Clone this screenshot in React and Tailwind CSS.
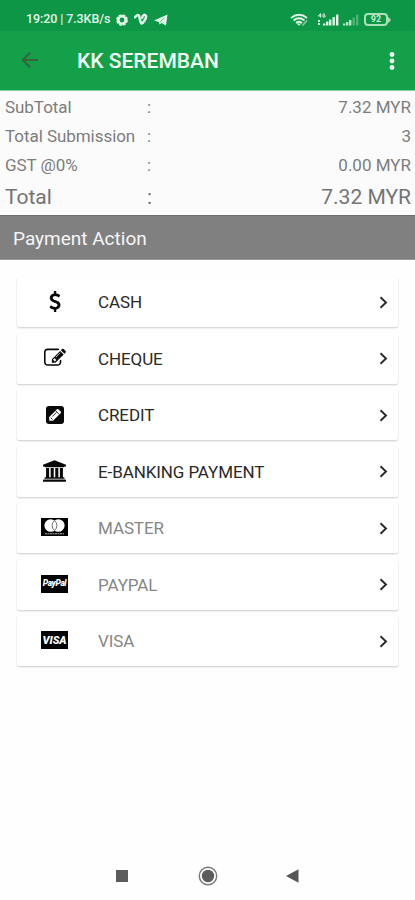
import React from "react";

function DollarIcon() {
  return (
    <svg viewBox="0 0 1792 1792" className="mb-[2px] h-[21px] w-[22px]" fill="currentColor">
      <path d="M1362 1185q0 153-99.500 263.500t-258.500 136.500v175q0 14-9 23t-23 9h-135q-13 0-22.500-9.500t-9.500-22.500v-175q-66-9-127.500-31t-101.500-44.500-74-48-46.500-37.500-17.500-18q-17-21-2-41l103-135q7-10 23-12 15-2 24 9l2 2q113 99 243 125 37 8 74 8 81 0 142.500-43t61.500-122q0-28-15-53t-33.500-42-58.500-37.500-66-32-80-32.500q-39-16-61.500-25t-61.500-26.500-62.500-31-56.500-35.500-53.500-42.500-43.500-49-35.500-58-21-66.500-8.500-78q0-138 98-242t255-134v-180q0-13 9.500-22.500t22.500-9.500h135q14 0 23 9t9 23v176q57 6 110.500 23t87 33.500 63.500 37.500 39 29 15 14q17 18 5 38l-81 146q-8 15-23 16-14 3-27-7-3-3-14.500-12t-39-26.500-58.500-32-74.500-26-85.500-11.500q-95 0-155 43t-60 111q0 26 8.500 48t29.500 41.500 39.500 33 56 31 60.500 27 70 27.500q53 20 81 31.500t76 35 75.500 42.500 62 50 53 63.500 31.500 76.500 13 94z" />
    </svg>
  );
}

function ChequeIcon() {
  return (
    <svg viewBox="0 0 1792 1792" className="mb-[2px] h-[22px] w-[22px]" fill="currentColor">
      <path d="M888 1184l116-116-152-152-116 116v56h96v96h56zm440-720q-16-16-33 1l-350 350q-17 17-1 33t33-1l350-350q17-17 1-33zm80 594v190q0 119-84.5 203.5t-203.5 84.5h-832q-119 0-203.5-84.5t-84.5-203.5v-832q0-119 84.5-203.5t203.5-84.5h832q63 0 117 25 15 7 18 23 3 17-9 29l-49 49q-14 14-32 8-23-6-45-6h-832q-66 0-113 47t-47 113v832q0 66 47 113t113 47h832q66 0 113-47t47-113v-126q0-13 9-22l64-64q15-15 35-7t20 29zm-96-738l288 288-672 672h-288v-288zm444 132l-92 92-288-288 92-92q28-28 68-28t68 28l152 152q28 28 28 68t-28 68z" />
    </svg>
  );
}

function CreditIcon() {
  return (
    <svg viewBox="0 0 18 18" className="mb-[1px] h-[18px] w-[18px]">
      <rect width="18" height="18" rx="3" fill="currentColor" />
      <path d="M3.200 14.800V11L10.800 3.400Q11.700 2.600 12.600 3.400L14.600 5.400Q15.400 6.300 14.600 7.200L7 14.800z" fill="#fff" />
      <path d="M4.600 11.600L6.400 13.400M9.600 4.800L13.200 8.400M6.300 10.600L10.500 6.400" stroke="currentColor" strokeWidth=".8" />
    </svg>
  );
}

function BankIcon() {
  return (
    <svg viewBox="0 0 1920 1792" className="mb-[2px] h-[22px] w-[23px]" fill="currentColor">
      <path d="M960 0l960 384v128h-128q0 26-20.500 45t-48.500 19h-1526q-28 0-48.500-19t-20.500-45h-128v-128zm-704 640h256v768h128v-768h256v768h128v-768h256v768h128v-768h256v768h59q28 0 48.500 19t20.500 45v64h-1664v-64q0-26 20.500-45t48.500-19h59v-768zm1595 960q28 0 48.500 19t20.500 45v128h-1920v-128q0-26 20.500-45t48.500-19h1782z" />
    </svg>
  );
}

function MasterIcon() {
  return (
    <svg viewBox="0 0 27 18" className="mb-[2px] h-[18px] w-[27px]">
      <rect width="27" height="18" fill="#000" />
      <circle cx="9.700" cy="7.500" r="6.300" fill="#fff" />
      <circle cx="17.300" cy="7.500" r="6.300" fill="#fff" />
      <path d="M13.500 2.600a6.200 6.200 0 0 1 0 9.800a6.200 6.200 0 0 1 0-9.800z" fill="#fff" stroke="#333" strokeWidth=".7" />
      <path d="M4 15.800h19" stroke="#fff" strokeWidth=".7" strokeDasharray="2 .5" />
    </svg>
  );
}

function WordCard({ children }) {
  return (
    <span className="mb-[2px] flex h-[18px] w-[27px] items-center justify-center overflow-hidden bg-black leading-none whitespace-nowrap text-white italic">
      {children}
    </span>
  );
}

const totals = [
  ["SubTotal", "7.32 MYR"],
  ["Total Submission", "3"],
  ["GST @0%", "0.00 MYR"],
];

const actions = [
  { label: "CASH", icon: <DollarIcon /> },
  { label: "CHEQUE", icon: <ChequeIcon /> },
  { label: "CREDIT", icon: <CreditIcon /> },
  { label: "E-BANKING PAYMENT", icon: <BankIcon /> },
  { label: "MASTER", muted: true, icon: <MasterIcon /> },
  { label: "PAYPAL", muted: true, icon: <WordCard><span className="text-[8.500px] font-black tracking-[-0.400px]">PayPal</span></WordCard> },
  { label: "VISA", muted: true, icon: <WordCard><span className="text-[11px] font-black">VISA</span></WordCard> },
];

function StatusBar() {
  return (
    <div className="flex h-[31px] shrink-0 items-center bg-[#0c9646] pt-[8px] pr-6 pl-[26px] text-[#e3f6e8]">
      <span className="w-[87px] text-[12.500px] font-medium tracking-[-0.100px] whitespace-nowrap">19:20 | 7.3KB/s</span>
      <svg viewBox="0 0 12 12" className="ml-[3px] h-3 w-3">
        <circle cx="6" cy="6" r="3.700" fill="none" stroke="currentColor" strokeWidth="2.600" />
        <circle cx="6" cy="6" r="5" fill="none" stroke="currentColor" strokeWidth="1.800" strokeDasharray="2.600 1.330" />
      </svg>
      <svg viewBox="0 0 14 13" className="ml-[6px] h-[13px] w-[14px]" fill="none" stroke="currentColor">
        <path d="M1 4.200C3.200 1.400 5 1 5.500 4.500S7 10.500 7.800 10.500S12.500 5.500 12 3.200S8.500 1.600 8.200 4.800" strokeWidth="2.500" strokeLinecap="round" />
      </svg>
      <svg viewBox="0 0 14 12" className="ml-[6px] h-3 w-[14px]" fill="currentColor">
        <path d="M0 6.500L13.500 .5L12 11.500L7.500 9L5.500 10.500L4.800 8z" />
        <path d="M5.500 8.500L10.500 3.800" stroke="#0c9646" strokeWidth=".6" />
      </svg>
      <div className="ml-auto flex items-center">
        <svg viewBox="0 0 19 14" className="h-[14px] w-[19px]" fill="none" stroke="currentColor" strokeWidth="1.700">
          <path d="M1 5Q9 -1.500 17 5M3.500 7.500Q9 3 14.500 7.500M6 10Q9 7.500 12 10" />
          <path d="M7.300 10.800L9 12.600l1.700-1.800z" fill="currentColor" strokeWidth=".5" />
          <path d="M12.500 12.500L17 7.500" strokeWidth="1.800" opacity=".55" />
        </svg>
        <svg viewBox="0 0 22 13" className="ml-[8px] h-[13px] w-[22px]" fill="currentColor">
          <path d="M3.500 4.500V.5L1.200 3H4.500M8 1H6v3h2V2.500H7" fill="none" stroke="currentColor" strokeWidth=".9" />
          <path d="M1 7h2v2H1zM1 10h2v2H1zM6 10.500h2.400v2H6zM9 8.500h2.400v4H9zM12 6.500h2.400v6H12zM15.500 4h2.400v8.500h-2.400zM19 1.500h2.400v11H19z" />
        </svg>
        <svg viewBox="0 0 16 13" className="ml-[4px] h-[13px] w-4" fill="currentColor">
          <path d="M0 10.500h2.400v2H0zM3 9h2.400v3.500H3zM6 7h2.400v5.500H6z" opacity=".8" />
          <path d="M9.500 4.500h2.400v8H9.500zM13 1.500h2.400v11H13z" opacity=".3" />
        </svg>
        <span className="ml-[5px] flex h-[13px] w-[24px] items-center justify-center rounded-[4px] border-2 border-[#a9dfb9] text-[9px] leading-none font-bold text-[#c9ecd2]">92</span>
        <svg viewBox="0 0 3 6" className="h-[6px] w-[3px]" fill="#a9dfb9">
          <path d="M0 0l2.500 2v2L0 6z" />
        </svg>
      </div>
    </div>
  );
}

export default function App() {
  return (
    <div className="flex h-[900px] w-[415px] flex-col overflow-hidden bg-[#fefefe] font-[Roboto,sans-serif]">
      <StatusBar />
      <header className="flex h-[59px] shrink-0 items-center bg-[#14a049] pr-[20px] pl-[21px]">
        <svg viewBox="0 0 18 18" className="mb-px h-[18px] w-[18px]" fill="none" stroke="#39643f" strokeWidth="2.100">
          <path d="M17 9H2M9.200 1.500L1.800 9l7.400 7.500" />
        </svg>
        <h1 className="ml-[38px] pt-[3px] text-[21px] font-medium text-[#f3fff5]">KK SEREMBAN</h1>
        <svg viewBox="0 0 6 20" className="ml-auto h-5 w-[6px]" fill="#eefcf0">
          <circle cx="3" cy="3.500" r="2.400" />
          <circle cx="3" cy="10" r="2.400" />
          <circle cx="3" cy="16.500" r="2.400" />
        </svg>
      </header>

      <section className="h-[125px] shrink-0 border-t border-[#8bd0a1] bg-[#fbfbfb] pt-[2px] pr-1 pl-[5px] text-[17px] text-[#7d7d7d]">
        {totals.map(([name, value]) => (
          <div key={name} className="flex h-[29px] items-center">
            <span className="w-[142px] tracking-[-0.050px]">{name}</span>
            <span>:</span>
            <span className="ml-auto">{value}</span>
          </div>
        ))}
        <div className="flex h-[35px] items-center pt-px text-[21px] text-[#747474]">
          <span className="w-[142px]">Total</span>
          <span>:</span>
          <span className="ml-auto">7.32 MYR</span>
        </div>
      </section>

      <h2 className="flex h-[45px] shrink-0 items-center border-y border-t-[#6f6f6f] border-b-[#999] bg-[#808080] pt-[3px] pl-[13px] text-[19px] text-[#f5f5f5]">
        Payment Action
      </h2>

      <main className="flex flex-col gap-[6.500px] px-[17px] pt-[17px]">
        {actions.map(({ label, icon, muted }) => (
          <div
            key={label}
            className="flex h-[50px] items-center rounded-[2px] bg-white pr-[10px] shadow-[0_1px_2px_rgba(0,0,0,0.2)]"
          >
            <span className="flex w-[75px] items-center justify-center text-[#080808]">{icon}</span>
            <span className={muted ? "ml-[6px] pt-[2px] text-[17px] tracking-[-0.100px] text-[#868686]" : "ml-[6px] pt-[2px] text-[17px] tracking-[-0.100px] text-[#292929]"}>{label}</span>
            <svg viewBox="0 0 9 13" className="ml-auto h-[13px] w-[9px]" fill="none" stroke="#292929" strokeWidth="1.900">
              <path d="M1.500 1.300L7 6.500L1.500 11.700" />
            </svg>
          </div>
        ))}
      </main>

      <nav className="mt-auto flex h-[49px] shrink-0 items-center pl-[116px]">
        <span className="h-[12px] w-[12px] bg-[#5c5c5c]" />
        <svg viewBox="0 0 20 20" className="ml-[70px] h-5 w-5">
          <circle cx="10" cy="10" r="8.700" fill="none" stroke="#777" strokeWidth="1.400" />
          <circle cx="10" cy="10" r="6.200" fill="#5c5c5c" />
        </svg>
        <svg viewBox="0 0 13 14" className="ml-[68px] h-[14px] w-[13px]" fill="#555">
          <path d="M0 7L12.500 .3V13.700z" />
        </svg>
      </nav>
    </div>
  );
}
